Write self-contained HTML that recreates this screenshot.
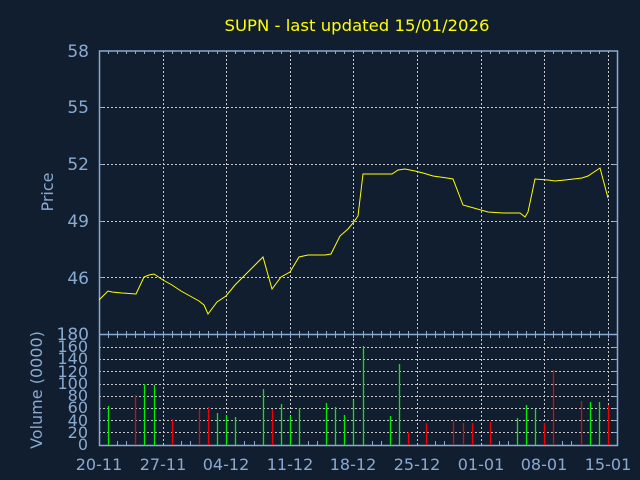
<!DOCTYPE html>
<html><head><style>
html,body{margin:0;padding:0;background:#111e2f;}
svg{display:block}
text{font-family:"DejaVu Sans","Liberation Sans",sans-serif;}
</style></head><body>
<svg width="640" height="480" viewBox="0 0 640 480" xmlns="http://www.w3.org/2000/svg">
<rect width="640" height="480" fill="#111e2f"/>
<text x="357" y="31" fill="#ffff00" font-size="16" text-anchor="middle" textLength="265" lengthAdjust="spacingAndGlyphs">SUPN - last updated 15/01/2026</text>
<g stroke="#c8c8c8" stroke-width="1" stroke-dasharray="2,2" fill="none">
<path d="M163.5 51V445M226.5 51V445M290.5 51V445M353.5 51V445M417.5 51V445M481.5 51V445M544.5 51V445M608.5 51V445"/>
<path d="M99 107.5H617M99 164.5H617M99 221.5H617M99 277.5H617"/>
<path d="M99 347.5H617M99 359.5H617M99 371.5H617M99 384.5H617M99 396.5H617M99 408.5H617M99 420.5H617M99 432.5H617"/>
</g>
<g stroke="#8aaad2" stroke-width="1.5" fill="none">
<path d="M99.5 51V445.5H617.5V51Z"/>
<path d="M99 334.5H617"/>
</g>
<g stroke="#8aaad2" stroke-width="1" fill="none">
<path d="M108.5 51v3M117.5 51v3M126.5 51v3M135.5 51v3M144.5 51v3M154.5 51v3M172.5 51v3M181.5 51v3M190.5 51v3M199.5 51v3M208.5 51v3M217.5 51v3M235.5 51v3M244.5 51v3M254.5 51v3M263.5 51v3M272.5 51v3M281.5 51v3M299.5 51v3M308.5 51v3M317.5 51v3M326.5 51v3M335.5 51v3M344.5 51v3M363.5 51v3M372.5 51v3M381.5 51v3M390.5 51v3M399.5 51v3M408.5 51v3M426.5 51v3M435.5 51v3M444.5 51v3M453.5 51v3M462.5 51v3M471.5 51v3M490.5 51v3M499.5 51v3M508.5 51v3M517.5 51v3M526.5 51v3M535.5 51v3M553.5 51v3M562.5 51v3M571.5 51v3M581.5 51v3M590.5 51v3M599.5 51v3"/>
<path d="M108.5 331v7M117.5 331v7M126.5 331v7M135.5 331v7M144.5 331v7M154.5 331v7M163.5 331v7M172.5 331v7M181.5 331v7M190.5 331v7M199.5 331v7M208.5 331v7M217.5 331v7M226.5 331v7M235.5 331v7M244.5 331v7M254.5 331v7M263.5 331v7M272.5 331v7M281.5 331v7M290.5 331v7M299.5 331v7M308.5 331v7M317.5 331v7M326.5 331v7M335.5 331v7M344.5 331v7M353.5 331v7M363.5 331v7M372.5 331v7M381.5 331v7M390.5 331v7M399.5 331v7M408.5 331v7M417.5 331v7M426.5 331v7M435.5 331v7M444.5 331v7M453.5 331v7M462.5 331v7M471.5 331v7M481.5 331v7M490.5 331v7M499.5 331v7M508.5 331v7M517.5 331v7M526.5 331v7M535.5 331v7M544.5 331v7M553.5 331v7M562.5 331v7M571.5 331v7M581.5 331v7M590.5 331v7M599.5 331v7M608.5 331v7"/>
<path d="M117.5 445v-4M126.5 445v-4M144.5 445v-4M154.5 445v-4M172.5 445v-4M181.5 445v-4M190.5 445v-4M199.5 445v-4M208.5 445v-4M217.5 445v-4M235.5 445v-4M244.5 445v-4M254.5 445v-4M263.5 445v-4M281.5 445v-4M299.5 445v-4M308.5 445v-4M317.5 445v-4M372.5 445v-4M381.5 445v-4M435.5 445v-4M444.5 445v-4M499.5 445v-4M508.5 445v-4M562.5 445v-4M571.5 445v-4"/>
<path d="M99 107.5h4M99 164.5h4M99 221.5h4M99 277.5h4M613 107.5h4M613 164.5h4M613 221.5h4M613 277.5h4M613 347.5h4M613 359.5h4M613 371.5h4M613 384.5h4M613 396.5h4M613 408.5h4M613 420.5h4M613 432.5h4"/>
</g>
<g stroke-width="1.3">
<g stroke="#00ee00">
<path d="M108.5 445V406M144.5 445V384M154.5 445V385M217.5 445V413M226.5 445V415M235.5 445V417M263.5 445V389M281.5 445V404M290.5 445V416M299.5 445V408M326.5 445V403M335.5 445V407M344.5 445V415M353.5 445V400M363.5 445V346M390.5 445V416M399.5 445V364M517.5 445V418M526.5 445V405M535.5 445V409M590.5 445V402M599.5 445V402"/>
</g>
<g stroke="#ee0000">
<path d="M135.5 445V395M172.5 445V419M199.5 445V409M208.5 445V407M272.5 445V409M408.5 445V432M426.5 445V423M453.5 445V421M463.5 445V423M472.5 445V423M490.5 445V422M544.5 445V423M553.5 445V370M581.5 445V401M608.5 445V405"/>
</g>
</g>
<polyline fill="none" stroke="#ffff00" stroke-width="1" points="99,300 108,291 112,292 122,293 136,294 144,277 149,275 154,274 163,280 172,285 181,291 190,296 199,301 204,305 208,314 217,302 226,296 235,285 244,276 254,266 263,257 272,289 281,277 290,272 299,257 308,255 325,255 331,254 335,246 340,236 348,229 353,223 358,216 363,174 392,174 398,170 405,169 415,171 423,173 433,176 447,178 453,179 463,205 488,212 503,213 520,213 525,217 528,212 535,179 548,180 555,181 565,180 582,178 588,176 600,168 608,198"/>
<g fill="#8aaad2" font-size="17" text-anchor="end">
<text x="89" y="57">58</text>
<text x="89" y="113">55</text>
<text x="89" y="170">52</text>
<text x="89" y="227">49</text>
<text x="89" y="284">46</text>
<text x="89" y="340">180</text>
</g>
<g fill="#8aaad2" font-size="16" text-anchor="end">
<text x="88" y="352">160</text>
<text x="88" y="364">140</text>
<text x="88" y="377">120</text>
<text x="88" y="389">100</text>
<text x="88" y="401">80</text>
<text x="88" y="413">60</text>
<text x="88" y="426">40</text>
<text x="88" y="438">20</text>
<text x="88" y="450">0</text>
</g>
<g fill="#8aaad2" font-size="16" text-anchor="middle">
<text x="99" y="470">20-11</text>
<text x="163" y="470">27-11</text>
<text x="226" y="470">04-12</text>
<text x="290" y="470">11-12</text>
<text x="353" y="470">18-12</text>
<text x="417" y="470">25-12</text>
<text x="481" y="470">01-01</text>
<text x="544" y="470">08-01</text>
<text x="608" y="470">15-01</text>
</g>
<text transform="translate(53,192) rotate(-90)" fill="#8aaad2" font-size="16" text-anchor="middle">Price</text>
<text transform="translate(42,390) rotate(-90)" fill="#8aaad2" font-size="16" text-anchor="middle">Volume (0000)</text>
</svg>
</body></html>
